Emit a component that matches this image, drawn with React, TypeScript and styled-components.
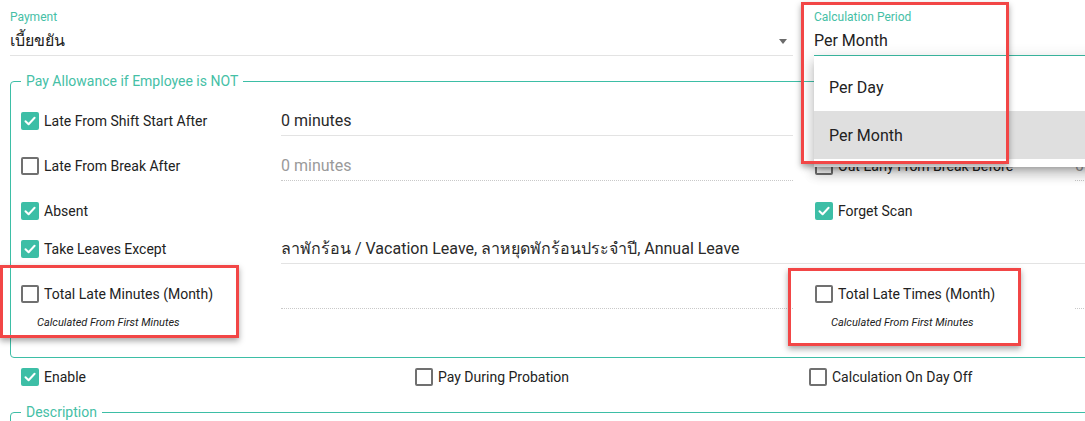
import styled, { createGlobalStyle } from "styled-components";

const TEAL = "#3dbea6";
const TEAL_TEXT = "#45c0a6";
const RED = "#f24646";

const GlobalStyle = createGlobalStyle`
  html, body {
    margin: 0;
    padding: 0;
    background: #ffffff;
    overflow: hidden;
  }
  body {
    font-family: Roboto, "Noto Sans", "DejaVu Sans", sans-serif;
    color: #222222;
  }
  * {
    box-sizing: border-box;
  }
`;

function Check(props: { checked?: boolean; label: string }) {
  return (
    <CheckRow>
      <Box $checked={props.checked}>
        {props.checked && (
          <svg width="14" height="14" viewBox="0 0 14 14">
            <polyline
              points="2.5,7.2 5.6,10.2 11.6,3.8"
              fill="none"
              stroke="#ffffff"
              strokeWidth="2"
              strokeLinecap="round"
              strokeLinejoin="round"
            />
          </svg>
        )}
      </Box>
      <CheckText>{props.label}</CheckText>
    </CheckRow>
  );
}

export default function App() {
  return (
    <Page>
      <GlobalStyle />
      <TopRow>
        <SelectField>
          <FieldLabel>Payment</FieldLabel>
          <ValueRow>
            <Value>เบี้ยขยัน</Value>
            <Arrow />
          </ValueRow>
        </SelectField>
        <SelectField $focused>
          <FieldLabel>Calculation Period</FieldLabel>
          <ValueRow>
            <Value>Per Month</Value>
          </ValueRow>
          <Menu>
            <MenuItem>Per Day</MenuItem>
            <MenuItem $selected>Per Month</MenuItem>
          </Menu>
        </SelectField>
      </TopRow>

      <Group>
        <Legend>Pay Allowance if Employee is NOT</Legend>
        <Row $h={45}>
          <Check checked label="Late From Shift Start After" />
          <Input>0 minutes</Input>
          <Check checked label="Out Early From Shift End Before" />
          <Input>0 minutes</Input>
        </Row>
        <Row $h={45}>
          <Check label="Late From Break After" />
          <Input $disabled>0 minutes</Input>
          <Check label="Out Early From Break Before" />
          <Input $disabled>0 minutes</Input>
        </Row>
        <Row $h={45}>
          <Check checked label="Absent" />
          <Empty />
          <Check checked label="Forget Scan" />
          <Empty />
        </Row>
        <Row $h={38}>
          <Check checked label="Take Leaves Except" />
          <Input $wide>
            ลาพักร้อน / Vacation Leave, ลาหยุดพักร้อนประจำปี, Annual Leave
          </Input>
        </Row>
        <HintRow>
          <div>
            <Check label="Total Late Minutes (Month)" />
            <Hint>Calculated From First Minutes</Hint>
          </div>
          <Input $disabled />
          <div>
            <Check label="Total Late Times (Month)" />
            <Hint>Calculated From First Minutes</Hint>
          </div>
          <Input $disabled />
        </HintRow>
      </Group>

      <Options>
        <Check checked label="Enable" />
        <Check label="Pay During Probation" />
        <Check label="Calculation On Day Off" />
      </Options>

      <Group $plain>
        <Legend>Description</Legend>
      </Group>

      <Mark style={{ left: 801, top: 2, width: 208, height: 162 }} />
      <Mark style={{ left: 0, top: 265, width: 239, height: 73 }} />
      <Mark style={{ left: 788, top: 268, width: 233, height: 78 }} />
    </Page>
  );
}

const Page = styled.div`
  position: relative;
  width: 1607px;
  height: 421px;
  padding: 0 10px;
`;

const TopRow = styled.div`
  display: grid;
  grid-template-columns: 783px 783px;
  column-gap: 21px;
  padding-top: 10px;
`;

const SelectField = styled.div<{ $focused?: boolean }>`
  position: relative;
  padding-bottom: 2px;
  border-bottom: 1px solid ${(p) => (p.$focused ? TEAL : "#e3e3e3")};
  height: 46px;
`;

const FieldLabel = styled.div`
  font-size: 12px;
  line-height: 14px;
  color: ${TEAL_TEXT};
`;

const ValueRow = styled.div`
  display: flex;
  align-items: center;
  justify-content: space-between;
  margin-top: 5px;
  height: 24px;
`;

const Value = styled.div`
  font-size: 16px;
  line-height: 24px;
  color: #222222;
`;

const Arrow = styled.div`
  width: 0;
  height: 0;
  margin-right: 6px;
  border-left: 4.5px solid transparent;
  border-right: 4.5px solid transparent;
  border-top: 5px solid #6b6b6b;
`;

const Menu = styled.div`
  position: absolute;
  left: 0;
  top: 46px;
  width: 100%;
  padding: 7px 0 8px;
  background: #ffffff;
  box-shadow: 0 5px 5px -3px rgba(0, 0, 0, 0.2), 0 8px 10px 1px rgba(0, 0, 0, 0.14),
    0 3px 14px 2px rgba(0, 0, 0, 0.12);
  z-index: 5;
`;

const MenuItem = styled.div<{ $selected?: boolean }>`
  height: 48px;
  display: flex;
  align-items: center;
  padding-left: 15px;
  font-size: 16px;
  color: #222222;
  background: ${(p) => (p.$selected ? "#dfdfdf" : "#ffffff")};
`;

const Group = styled.fieldset<{ $plain?: boolean }>`
  margin: ${(p) => (p.$plain ? "8px 0 0" : "17px 0 0")};
  padding: 9px 0 ${(p) => (p.$plain ? "40px" : "27px")} 10px;
  border: 1px solid ${TEAL};
  border-radius: 4px;
  min-width: 0;
`;

const Legend = styled.legend`
  padding: 0 5px;
  font-size: 14px;
  line-height: 16px;
  color: ${TEAL_TEXT};
`;

const Row = styled.div<{ $h: number }>`
  display: grid;
  grid-template-columns: 238px 512px 238px 1fr;
  column-gap: 22px;
  align-items: end;
  height: ${(p) => p.$h}px;
  padding-bottom: 7px;
`;

const HintRow = styled(Row).attrs({ $h: 0 })`
  height: auto;
  align-items: start;
  padding: 7px 0 0;
`;

const CheckRow = styled.div`
  display: flex;
  align-items: center;
  height: 31px;
  gap: 5px;
`;

const Box = styled.div<{ $checked?: boolean }>`
  width: 18px;
  height: 18px;
  flex: none;
  display: flex;
  align-items: center;
  justify-content: center;
  border-radius: 2px;
  border: ${(p) => (p.$checked ? "none" : "2px solid #707070")};
  background: ${(p) => (p.$checked ? TEAL : "transparent")};
`;

const CheckText = styled.span`
  font-size: 14px;
  color: #222222;
  white-space: nowrap;
`;

const Hint = styled.div`
  margin: 7px 0 0 16px;
  font-size: 11px;
  line-height: 14px;
  font-style: italic;
  color: #222222;
  white-space: nowrap;
`;

const Input = styled.div<{ $disabled?: boolean; $wide?: boolean }>`
  grid-column: ${(p) => (p.$wide ? "2 / -1" : "auto")};
  height: 31px;
  display: flex;
  align-items: center;
  font-size: 16px;
  color: ${(p) => (p.$disabled ? "#9a9a9a" : "#2a2a2a")};
  border-bottom: 1px ${(p) => (p.$disabled ? "dotted #c9c9c9" : "solid #e3e3e3")};
  white-space: nowrap;
  overflow: hidden;
`;

const Empty = styled.div`
  height: 31px;
`;

const Options = styled.div`
  display: grid;
  grid-template-columns: repeat(3, 394px);
  align-items: center;
  height: 38px;
  padding-left: 11px;
`;

const Mark = styled.div`
  position: absolute;
  border: 3px solid ${RED};
  box-shadow: 0 3px 6px rgba(0, 0, 0, 0.35);
  z-index: 10;
  pointer-events: none;
`;
